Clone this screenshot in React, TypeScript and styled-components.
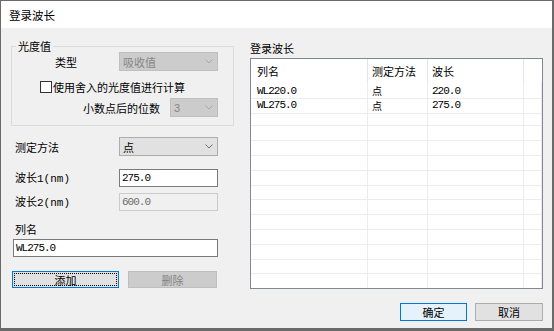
import React from "react";
import styled, { createGlobalStyle } from "styled-components";

const GlobalStyle = createGlobalStyle`
  html, body {
    margin: 0;
    padding: 0;
    background: #f0f0f0;
  }
  body {
    font-family: "Noto Sans CJK SC", "Noto Sans", sans-serif;
    font-size: 11px;
    color: #000;
  }
  * {
    box-sizing: border-box;
  }
`;

const Window = styled.div`
  width: 554px;
  height: 331px;
  border: 1px solid #6a6a6a;
  border-right-width: 2px;
  border-bottom-width: 3px;
  background: #f0f0f0;
  display: flex;
  flex-direction: column;
  overflow: hidden;
`;

const TitleBar = styled.div`
  height: 27px;
  flex: none;
  background: #fff;
  padding-left: 8px;
  display: flex;
  align-items: center;
  font-size: 11.5px;
  line-height: 14px;
`;

const Body = styled.div`
  padding: 12px 9px 0 10px;
  display: flex;
  flex-direction: column;
`;

const Main = styled.div`
  display: flex;
  gap: 16px;
`;

const LeftCol = styled.div`
  width: 223px;
  display: flex;
  flex-direction: column;
`;

const RightCol = styled.div`
  width: 293px;
  display: flex;
  flex-direction: column;
`;

const Group = styled.fieldset`
  margin: 0;
  padding: 0 15px 8px 0;
  border: 1px solid #dcdcdc;
  min-inline-size: 0;
`;

const Legend = styled.legend`
  margin-left: 4px;
  padding: 0 2px;
  font-size: 11px;
  line-height: 12px;
`;

const Row = styled.div<{ $indent: number; $top: number; $h: number; $right?: number }>`
  display: flex;
  align-items: center;
  height: ${(p) => p.$h}px;
  margin-top: ${(p) => p.$top}px;
  padding-left: ${(p) => p.$indent}px;
  padding-right: ${(p) => p.$right ?? 0}px;
  white-space: nowrap;
`;

const Label = styled.span`
  line-height: 14px;
`;

const Latin = styled.span`
  font-family: "Liberation Mono", monospace;
  font-size: 11px;
`;

const Combo = styled.div<{ $w: number; $disabled?: boolean }>`
  width: ${(p) => p.$w}px;
  height: 19px;
  margin-left: auto;
  display: flex;
  align-items: center;
  justify-content: space-between;
  padding: 0 4px 0 3px;
  border: 1px solid ${(p) => (p.$disabled ? "#bfbfbf" : "#adadad")};
  background: ${(p) => (p.$disabled ? "#cccccc" : "#e1e1e1")};
  color: ${(p) => (p.$disabled ? "#858585" : "#000")};
  line-height: 14px;
`;

const ComboValue = styled.span<{ $mono?: boolean }>`
  font-family: ${(p) =>
    p.$mono ? '"Liberation Sans", sans-serif' : '"Noto Sans CJK SC", sans-serif'};
`;

const TextBox = styled.div<{ $w: number; $disabled?: boolean; $left?: number }>`
  width: ${(p) => p.$w}px;
  height: 18px;
  margin-left: ${(p) => (p.$left !== undefined ? `${p.$left}px` : "auto")};
  display: flex;
  align-items: center;
  padding-left: 2px;
  border: 1px solid ${(p) => (p.$disabled ? "#cccccc" : "#7a7a7a")};
  background: ${(p) => (p.$disabled ? "#f0f0f0" : "#fff")};
  color: ${(p) => (p.$disabled ? "#6d6d6d" : "#000")};
  font-family: "Liberation Mono", monospace;
  font-size: 11px;
  letter-spacing: -1px;
`;

const CheckBox = styled.span`
  width: 12px;
  height: 12px;
  border: 1px solid #333;
  background: #fff;
  margin-right: 1px;
  flex: none;
`;

const ButtonRow = styled.div<{ $top: number; $indent: number; $justify?: string }>`
  display: flex;
  gap: ${(p) => (p.$justify ? 8 : 9)}px;
  margin-top: ${(p) => p.$top}px;
  padding-left: ${(p) => p.$indent}px;
  justify-content: ${(p) => p.$justify ?? "flex-start"};
`;

const Button = styled.button<{ $w: number; $h: number; $variant?: "focus" | "default" | "disabled" | "normal" }>`
  width: ${(p) => p.$w}px;
  height: ${(p) => p.$h}px;
  padding: 0;
  font-family: "Noto Sans CJK SC", sans-serif;
  font-size: 11px;
  line-height: 14px;
  border: 1px solid
    ${(p) =>
      p.$variant === "focus" || p.$variant === "default"
        ? "#0078d7"
        : p.$variant === "disabled"
        ? "#bfbfbf"
        : "#adadad"};
  background: ${(p) =>
    p.$variant === "default" ? "#e5f1fb" : p.$variant === "disabled" ? "#cccccc" : "#e1e1e1"};
  color: ${(p) => (p.$variant === "disabled" ? "#838383" : "#000")};
  outline: ${(p) => (p.$variant === "focus" ? "1px dotted #000" : "none")};
  outline-offset: -3px;
`;

const ListTitle = styled.div`
  line-height: 16px;
  margin-bottom: 2px;
`;

const List = styled.div`
  height: 231px;
  border: 1px solid #828790;
  background: #fff;
  overflow: hidden;
`;

const GridRow = styled.div<{ $h: number }>`
  display: grid;
  grid-template-columns: 117px 60px 96px 1fr;
  height: ${(p) => p.$h}px;
`;

const HeadCell = styled.div<{ $pad: number }>`
  padding-left: ${(p) => p.$pad}px;
  padding-top: 4px;
  line-height: 16px;
  border-right: 1px solid #e5e5e5;
  white-space: nowrap;
`;

const Cell = styled.div<{ $pad: number; $mono?: boolean }>`
  padding-left: ${(p) => p.$pad}px;
  border-right: 1px solid #ececec;
  border-bottom: 1px solid #ececec;
  display: flex;
  align-items: center;
  padding-top: 1px;
  white-space: nowrap;
  font-family: ${(p) =>
    p.$mono ? '"Liberation Mono", monospace' : '"Noto Sans CJK SC", sans-serif'};
  font-size: ${(p) => (p.$mono ? 11 : 10)}px;
  letter-spacing: ${(p) => (p.$mono ? -1 : 0)}px;
`;

const Chevron = ({ color }: { color: string }) => (
  <svg width="8" height="5" viewBox="0 0 8 5">
    <polyline points="0.5,0.5 4,4 7.5,0.5" fill="none" stroke={color} strokeWidth="1" />
  </svg>
);

const rows = [
  { name: "WL220.0", method: "点", wl: "220.0" },
  { name: "WL275.0", method: "点", wl: "275.0" },
  ...Array.from({ length: 14 }, () => ({ name: "", method: "", wl: "" })),
];

export default function App() {
  return (
    <>
      <GlobalStyle />
      <Window>
        <TitleBar>登录波长</TitleBar>
        <Body>
          <Main>
            <LeftCol>
              <Group>
                <Legend>光度值</Legend>
                <Row $indent={43} $top={0} $h={19}>
                  <Label>类型</Label>
                  <Combo $w={99} $disabled>
                    <ComboValue>吸收值</ComboValue>
                    <Chevron color="#a8a8a8" />
                  </Combo>
                </Row>
                <Row $indent={28} $top={8} $h={15}>
                  <CheckBox />
                  <Label>使用舍入的光度值进行计算</Label>
                </Row>
                <Row $indent={71} $top={4} $h={19}>
                  <Label>小数点后的位数</Label>
                  <Combo $w={48} $disabled>
                    <ComboValue $mono>3</ComboValue>
                    <Chevron color="#a8a8a8" />
                  </Combo>
                </Row>
              </Group>
              <Row $indent={4} $right={16} $top={11} $h={19}>
                <Label>测定方法</Label>
                <Combo $w={99}>
                  <ComboValue>点</ComboValue>
                  <Chevron color="#707070" />
                </Combo>
              </Row>
              <Row $indent={4} $right={16} $top={13} $h={18}>
                <Label>
                  波长<Latin>1(nm)</Latin>
                </Label>
                <TextBox $w={99}>275.0</TextBox>
              </Row>
              <Row $indent={4} $right={16} $top={6} $h={18}>
                <Label>
                  波长<Latin>2(nm)</Latin>
                </Label>
                <TextBox $w={99} $disabled>
                  600.0
                </TextBox>
              </Row>
              <Row $indent={4} $top={11} $h={14}>
                <Label>列名</Label>
              </Row>
              <Row $indent={0} $top={3} $h={18}>
                <TextBox $w={205} $left={2}>
                  WL275.0
                </TextBox>
              </Row>
              <ButtonRow $top={14} $indent={1}>
                <Button $w={107} $h={17} $variant="focus">
                  添加
                </Button>
                <Button $w={89} $h={17} $variant="disabled">
                  删除
                </Button>
              </ButtonRow>
            </LeftCol>
            <RightCol>
              <ListTitle>登录波长</ListTitle>
              <List>
                <GridRow $h={23}>
                  <HeadCell $pad={6}>列名</HeadCell>
                  <HeadCell $pad={4}>测定方法</HeadCell>
                  <HeadCell $pad={4}>波长</HeadCell>
                  <div />
                </GridRow>
                {rows.map((r, i) => (
                  <GridRow $h={14.8} key={i}>
                    <Cell $pad={6} $mono>
                      {r.name}
                    </Cell>
                    <Cell $pad={4}>{r.method}</Cell>
                    <Cell $pad={4} $mono>
                      {r.wl}
                    </Cell>
                    <Cell $pad={0} />
                  </GridRow>
                ))}
              </List>
            </RightCol>
          </Main>
          <ButtonRow $top={14} $indent={0} $justify="flex-end">
            <Button $w={67} $h={18} $variant="default">
              确定
            </Button>
            <Button $w={68} $h={18}>
              取消
            </Button>
          </ButtonRow>
        </Body>
      </Window>
    </>
  );
}
